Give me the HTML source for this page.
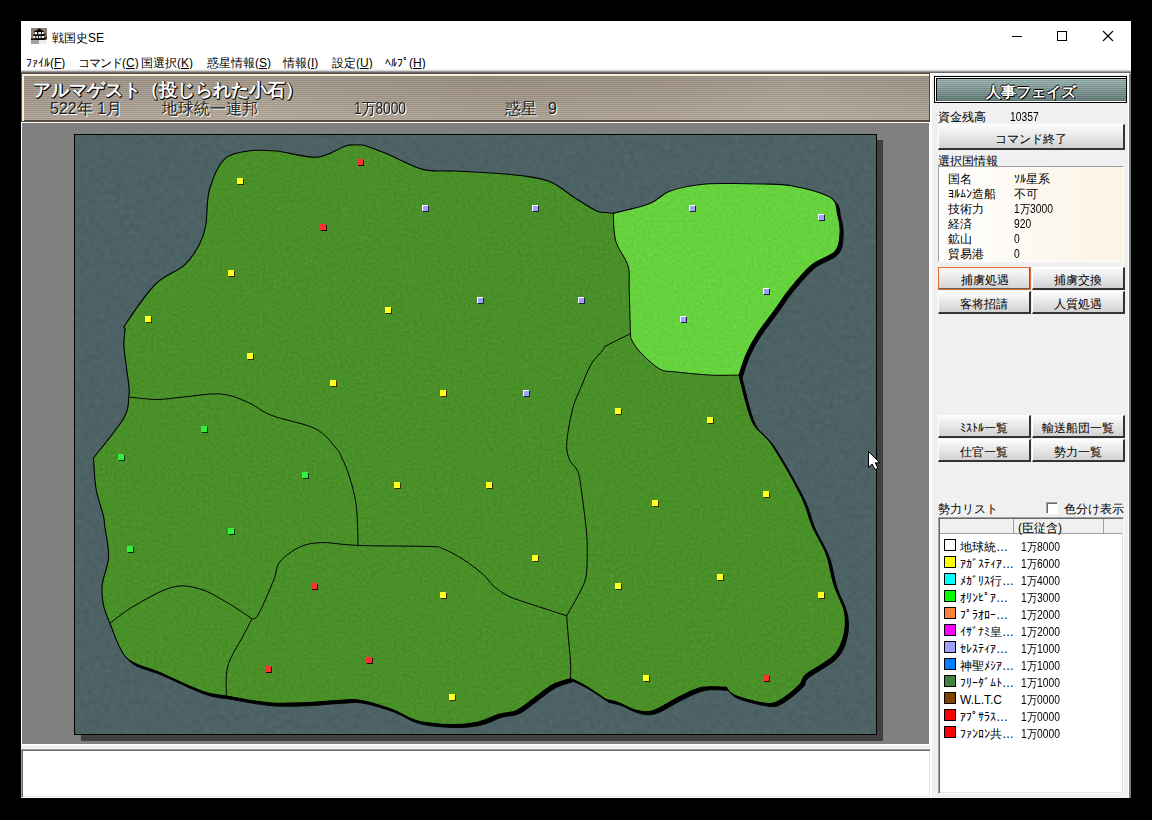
<!DOCTYPE html>
<html><head><meta charset="utf-8">
<style>
@font-face{font-family:"JF";src:local("Liberation Sans");size-adjust:133.3%;unicode-range:U+3000-9FFF,U+FF01-FF5E}
@font-face{font-family:"JF";src:local("Liberation Sans");size-adjust:66.7%;unicode-range:U+FF61-FF9F}
@font-face{font-family:"JP";src:local("Liberation Sans");size-adjust:133.3%;unicode-range:U+3000-309F,U+4E00-9FFF,U+FF01-FF5E}
@font-face{font-family:"JP";src:local("Liberation Sans");size-adjust:93%;unicode-range:U+30A0-30FF}
@font-face{font-family:"JP";src:local("Liberation Sans");size-adjust:66.7%;unicode-range:U+FF61-FF9F}
*{margin:0;padding:0;box-sizing:border-box}
html,body{width:1152px;height:820px;overflow:hidden;background:#000}
body{position:relative;font-family:JP,"Liberation Sans",sans-serif;font-size:12px;color:#000}
.a{position:absolute}
.jf{font-family:JF,"Liberation Sans",sans-serif}
.n{transform:scaleX(.86);transform-origin:0 0}
.t{position:absolute;white-space:nowrap;line-height:1;margin-top:2px}
#win{left:21px;top:21px;width:1110px;height:777px;background:#fff}
.btn{position:absolute;height:23px;border-top:1px solid #fff;border-left:1px solid #fff;border-right:2px solid #333;border-bottom:2px solid #333;background:linear-gradient(#fcfcfc,#d2d2d2);text-align:center;font-size:12px;line-height:19px;padding-top:3px;white-space:nowrap}
.sw{position:absolute;left:944px;width:12px;height:12px;border:1px solid #000}
</style></head><body>
<div id="win" class="a"></div>

<!-- title bar -->
<svg class="a" style="left:31px;top:28px" width="16" height="16" viewBox="0 0 16 16"><rect width="16" height="16" fill="#8a7e6c"/><path d="M0 12H16V16H0Z" fill="#a8a49c"/><path d="M8 12H16V16H8Z" fill="#ececec"/><path d="M8.5 0.2C10 1.5 11.5 2.5 12.8 3.3L12.5 4H3.2L3 3.4C5 2.5 7 1.5 8.5 0.2Z" fill="#050505"/><rect x="4" y="4" width="8.5" height="2.3" fill="#f4f4f4"/><rect x="6" y="4" width="1.4" height="2.3" fill="#222"/><rect x="10" y="4" width="1" height="2.3" fill="#222"/><path d="M2 6.6L12 6.3L14.6 5.2L14.2 7.2L12.5 8.1H2.5Z" fill="#050505"/><rect x="2.3" y="8.1" width="10.7" height="2.1" fill="#f0f0f0"/><rect x="4.3" y="8.1" width="1" height="2.1" fill="#222"/><rect x="7" y="8.1" width="1" height="2.1" fill="#222"/><rect x="9.6" y="8.1" width="1" height="2.1" fill="#333"/><path d="M0 10.4L13 10L15.8 8.2L15.6 10.5L13 12H0Z" fill="#050505"/></svg>
<div class="t" style="left:52px;top:30px;font-size:12px">戦国史SE</div>
<div class="a" style="left:1012px;top:36px;width:10px;height:1px;background:#000"></div>
<div class="a" style="left:1057px;top:31px;width:10px;height:10px;border:1px solid #000"></div>
<svg class="a" style="left:1102px;top:30px" width="12" height="12"><path d="M1 1L11 11M11 1L1 11" stroke="#000" stroke-width="1.1"/></svg>

<!-- menu -->
<div class="t" style="left:26px;top:55px;font-size:12px">ﾌｧｲﾙ(<u>F</u>)</div>
<div class="t" style="left:78px;top:55px;font-size:12px"><span style="letter-spacing:-1px">コマンド</span>(<u>C</u>)</div>
<div class="t" style="left:141px;top:55px;font-size:12px">国選択(<u>K</u>)</div>
<div class="t" style="left:207px;top:55px;font-size:12px">惑星情報(<u>S</u>)</div>
<div class="t" style="left:283px;top:55px;font-size:12px">情報(<u>I</u>)</div>
<div class="t" style="left:332px;top:55px;font-size:12px">設定(<u>U</u>)</div>
<div class="t" style="left:385px;top:55px;font-size:12px">ﾍﾙﾌﾟ(<u>H</u>)</div>

<!-- client edge -->
<div class="a" style="left:21px;top:69px;width:1110px;height:1px;background:#f0f0f0"></div>
<div class="a" style="left:21px;top:70px;width:1110px;height:1px;background:#dcdcdc"></div>
<div class="a" style="left:21px;top:71px;width:1110px;height:1px;background:#9a9a9a"></div>
<div class="a" style="left:21px;top:72px;width:1110px;height:1px;background:#6a6a6a"></div>

<!-- header panel -->
<div class="a" style="left:21px;top:73px;width:909px;height:49px;background:#564b40"></div>
<div class="a" style="left:22px;top:74px;width:907px;height:2px;background:#fbeedb"></div>
<div class="a" style="left:22px;top:74px;width:2px;height:47px;background:#fbeedb"></div>
<div class="a" style="left:24px;top:76px;width:905px;height:44px;background:repeating-linear-gradient(rgba(0,0,0,.07) 0,rgba(0,0,0,.07) 1px,rgba(255,255,255,.07) 1px,rgba(255,255,255,.07) 2px),linear-gradient(rgba(0,0,0,.07),rgba(255,255,255,.10)),linear-gradient(90deg,#a69a8a,#aea393 25%,#a49888 50%,#a89c8b 70%,#b0a696 85%,#a89d8e)"></div>
<div class="a" style="left:929px;top:73px;width:1px;height:49px;background:#564b40"></div>

<div class="t jf" style="left:33px;top:79px;font-size:18px;font-weight:bold;color:#fff;text-shadow:1px 1px 0 #000,1px 0 0 #000,0 1px 0 #000">アルマゲスト（投じられた小石）</div>
<div class="t jf" style="left:50px;top:99px;font-size:16px;color:#202020;text-shadow:1px 1px 0 #fff">522年 1月</div>
<div class="t jf" style="left:162px;top:99px;font-size:16px;color:#202020;text-shadow:1px 1px 0 #fff">地球統一連邦</div>
<div class="t jf n" style="left:354px;top:99px;font-size:16px;color:#202020;text-shadow:1px 1px 0 #fff">1万8000</div>
<div class="t jf" style="left:505px;top:99px;font-size:16px;color:#202020;text-shadow:1px 1px 0 #fff">惑星</div><div class="t jf" style="left:548px;top:99px;font-size:16px;color:#202020;text-shadow:1px 1px 0 #fff">9</div>

<!-- map area -->
<div class="a" style="left:21px;top:122px;width:909px;height:1px;background:#fff"></div>
<div class="a" style="left:21px;top:122px;width:1px;height:623px;background:#fff"></div>
<div class="a" style="left:22px;top:123px;width:907px;height:621px;background:#808080"></div>
<div class="a" style="left:877px;top:140px;width:6px;height:601px;background:#404040"></div>
<div class="a" style="left:81px;top:735px;width:796px;height:6px;background:#404040"></div>
<svg class="a" style="left:74px;top:134px" width="803" height="601" viewBox="74 134 803 601">
<defs>
<filter color-interpolation-filters="sRGB" id="nsea" x="74" y="134" width="803" height="601" filterUnits="userSpaceOnUse"><feTurbulence type="fractalNoise" baseFrequency="0.2" numOctaves="2" seed="7" result="n"/><feColorMatrix in="n" type="matrix" values="1 0 0 0 0  1 0 0 0 0  1 0 0 0 0  0 0 0 0 1" result="g"/><feComposite in="g" in2="SourceGraphic" operator="arithmetic" k1="0" k2="0.06" k3="1" k4="-0.03" result="c"/><feComposite in="c" in2="SourceGraphic" operator="in"/></filter>
<filter color-interpolation-filters="sRGB" id="nland" x="74" y="134" width="803" height="601" filterUnits="userSpaceOnUse"><feTurbulence type="fractalNoise" baseFrequency="0.35" numOctaves="2" seed="11" result="n"/><feColorMatrix in="n" type="matrix" values="1 0 0 0 0  1 0 0 0 0  1 0 0 0 0  0 0 0 0 1" result="g"/><feComposite in="g" in2="SourceGraphic" operator="arithmetic" k1="0" k2="0.09" k3="1" k4="-0.045" result="c"/><feComposite in="c" in2="SourceGraphic" operator="in"/></filter>
</defs>
<rect x="74" y="134" width="803" height="601" fill="#000"/>
<rect x="75" y="135" width="801" height="599" fill="#4c6265" filter="url(#nsea)"/>
<clipPath id="landclip"><path d="M224.0,159.6 C230.5,153.1 239.7,152.4 248.4,151.0 C257.1,149.6 265.0,150.0 276.4,151.0 C287.8,152.0 305.3,158.0 316.7,157.2 C328.1,156.4 338.4,148.2 344.9,146.2 C351.4,144.2 352.4,145.1 355.9,145.0 C359.3,144.9 360.1,144.1 365.6,145.7 C371.1,147.3 379.2,150.8 388.8,154.7 C398.4,158.6 411.9,166.7 422.9,169.4 C433.9,172.1 443.2,170.4 454.6,171.0 C466.0,171.6 480.2,172.2 491.2,173.0 C502.2,173.8 510.7,174.1 520.5,175.5 C530.3,176.9 540.9,177.9 549.8,181.6 C558.7,185.2 566.4,192.5 574.1,197.4 C581.8,202.3 590.8,208.3 596.1,210.8 C601.4,213.3 603.1,212.1 606.0,212.5 C608.9,212.9 612.1,213.2 613.3,213.3 C619.4,211.7 640.5,207.2 649.9,203.5 C659.2,199.8 661.3,194.4 669.4,191.3 C677.5,188.2 688.9,186.0 698.7,184.7 C708.5,183.4 717.4,183.6 728.0,183.5 C738.6,183.4 751.5,183.6 762.1,184.0 C772.7,184.4 780.0,183.5 791.4,185.7 C802.8,187.9 822.7,192.6 830.4,197.4 C838.1,202.2 836.1,208.8 837.7,214.5 C839.3,220.2 840.5,225.5 840.1,231.6 C839.7,237.7 840.2,245.3 835.3,251.0 C830.4,256.7 818.6,259.2 810.9,265.7 C803.2,272.2 794.6,283.1 788.9,290.0 C783.2,296.9 782.0,299.9 776.7,307.2 C771.4,314.5 762.3,326.1 757.2,334.0 C752.1,341.9 749.2,347.5 746.2,354.4 C743.2,361.2 740.2,371.7 739.0,375.1 C741.2,382.8 746.8,409.9 752.3,421.5 C757.8,433.1 763.8,432.2 771.9,444.6 C780.0,457.0 794.4,482.3 801.1,495.9 C807.8,509.5 808.0,516.3 812.2,526.0 C816.4,535.7 822.7,544.4 826.3,554.2 C829.9,564.0 831.0,575.5 834.0,584.9 C837.0,594.3 842.5,602.4 844.2,610.5 C845.9,618.6 845.9,626.1 844.2,633.6 C842.5,641.1 840.4,648.6 834.0,655.4 C827.6,662.2 811.6,669.7 805.8,674.6 C800.0,679.5 804.1,680.3 799.4,684.8 C794.7,689.3 783.8,698.5 777.6,701.5 C771.4,704.5 769.5,703.8 762.2,702.7 C755.0,701.6 740.1,697.7 734.1,695.1 C728.1,692.5 727.7,688.7 726.4,687.4 C722.4,687.4 709.8,685.9 702.1,687.4 C694.4,688.9 688.4,692.5 680.3,696.3 C672.2,700.1 660.7,708.0 653.4,710.4 C646.1,712.8 642.5,711.7 636.7,710.4 C630.9,709.1 623.9,704.5 618.8,702.7 C613.7,700.9 608.1,700.0 606.0,699.4 C602.6,697.2 591.8,689.6 585.9,686.1 C580.0,682.6 573.1,679.7 570.5,678.4 C567.5,679.5 558.6,681.6 552.6,684.8 C546.6,688.0 540.7,693.3 534.7,697.6 C528.7,701.9 522.7,707.6 516.7,710.4 C510.7,713.2 505.2,712.4 498.8,714.3 C492.4,716.2 486.0,720.3 478.3,722.0 C470.6,723.7 462.9,724.7 452.7,724.5 C442.4,724.3 427.1,723.3 416.8,720.7 C406.6,718.1 400.6,712.5 391.2,709.1 C381.8,705.7 369.0,701.7 360.5,700.2 C352.0,698.7 349.3,699.8 340.0,700.2 C330.7,700.6 316.4,702.3 304.5,702.7 C292.6,703.1 281.5,703.8 268.7,702.7 C255.9,701.6 238.8,698.2 227.7,696.3 C216.6,694.4 213.6,695.2 202.1,691.2 C190.6,687.2 171.1,677.5 158.5,672.0 C145.9,666.5 134.6,666.0 126.5,657.9 C118.4,649.8 112.7,629.1 109.9,623.3 C108.8,620.3 104.8,611.8 103.5,605.4 C102.2,599.0 101.4,593.0 102.2,584.9 C103.0,576.8 108.2,566.5 108.6,556.7 C109.0,546.9 105.6,532.9 104.7,526.0 C103.8,519.1 104.8,521.6 103.3,515.4 C101.8,509.1 97.6,498.1 96.0,488.5 C94.4,478.9 93.9,463.1 93.5,458.0 C98.6,451.3 118.1,428.2 124.0,417.8 C129.9,407.4 128.1,399.5 128.9,395.9 C128.9,394.3 129.7,394.2 128.9,386.1 C128.1,378.0 124.6,356.5 124.0,347.1 C123.4,337.8 124.8,334.0 125.2,330.0 C125.6,326.0 121.3,330.7 126.4,323.0 C131.5,315.3 146.1,293.6 155.7,284.0 C165.3,274.4 176.7,272.0 183.8,265.7 C190.9,259.4 194.8,252.9 198.4,246.2 C202.1,239.5 203.9,234.9 205.7,225.5 C207.5,216.1 206.3,201.0 209.4,190.0 C212.5,179.0 217.5,166.1 224.0,159.6Z"/></clipPath>
<path d="M224.0,159.6 C230.5,153.1 239.7,152.4 248.4,151.0 C257.1,149.6 265.0,150.0 276.4,151.0 C287.8,152.0 305.3,158.0 316.7,157.2 C328.1,156.4 338.4,148.2 344.9,146.2 C351.4,144.2 352.4,145.1 355.9,145.0 C359.3,144.9 360.1,144.1 365.6,145.7 C371.1,147.3 379.2,150.8 388.8,154.7 C398.4,158.6 411.9,166.7 422.9,169.4 C433.9,172.1 443.2,170.4 454.6,171.0 C466.0,171.6 480.2,172.2 491.2,173.0 C502.2,173.8 510.7,174.1 520.5,175.5 C530.3,176.9 540.9,177.9 549.8,181.6 C558.7,185.2 566.4,192.5 574.1,197.4 C581.8,202.3 590.8,208.3 596.1,210.8 C601.4,213.3 603.1,212.1 606.0,212.5 C608.9,212.9 612.1,213.2 613.3,213.3 C619.4,211.7 640.5,207.2 649.9,203.5 C659.2,199.8 661.3,194.4 669.4,191.3 C677.5,188.2 688.9,186.0 698.7,184.7 C708.5,183.4 717.4,183.6 728.0,183.5 C738.6,183.4 751.5,183.6 762.1,184.0 C772.7,184.4 780.0,183.5 791.4,185.7 C802.8,187.9 822.7,192.6 830.4,197.4 C838.1,202.2 836.1,208.8 837.7,214.5 C839.3,220.2 840.5,225.5 840.1,231.6 C839.7,237.7 840.2,245.3 835.3,251.0 C830.4,256.7 818.6,259.2 810.9,265.7 C803.2,272.2 794.6,283.1 788.9,290.0 C783.2,296.9 782.0,299.9 776.7,307.2 C771.4,314.5 762.3,326.1 757.2,334.0 C752.1,341.9 749.2,347.5 746.2,354.4 C743.2,361.2 740.2,371.7 739.0,375.1 C741.2,382.8 746.8,409.9 752.3,421.5 C757.8,433.1 763.8,432.2 771.9,444.6 C780.0,457.0 794.4,482.3 801.1,495.9 C807.8,509.5 808.0,516.3 812.2,526.0 C816.4,535.7 822.7,544.4 826.3,554.2 C829.9,564.0 831.0,575.5 834.0,584.9 C837.0,594.3 842.5,602.4 844.2,610.5 C845.9,618.6 845.9,626.1 844.2,633.6 C842.5,641.1 840.4,648.6 834.0,655.4 C827.6,662.2 811.6,669.7 805.8,674.6 C800.0,679.5 804.1,680.3 799.4,684.8 C794.7,689.3 783.8,698.5 777.6,701.5 C771.4,704.5 769.5,703.8 762.2,702.7 C755.0,701.6 740.1,697.7 734.1,695.1 C728.1,692.5 727.7,688.7 726.4,687.4 C722.4,687.4 709.8,685.9 702.1,687.4 C694.4,688.9 688.4,692.5 680.3,696.3 C672.2,700.1 660.7,708.0 653.4,710.4 C646.1,712.8 642.5,711.7 636.7,710.4 C630.9,709.1 623.9,704.5 618.8,702.7 C613.7,700.9 608.1,700.0 606.0,699.4 C602.6,697.2 591.8,689.6 585.9,686.1 C580.0,682.6 573.1,679.7 570.5,678.4 C567.5,679.5 558.6,681.6 552.6,684.8 C546.6,688.0 540.7,693.3 534.7,697.6 C528.7,701.9 522.7,707.6 516.7,710.4 C510.7,713.2 505.2,712.4 498.8,714.3 C492.4,716.2 486.0,720.3 478.3,722.0 C470.6,723.7 462.9,724.7 452.7,724.5 C442.4,724.3 427.1,723.3 416.8,720.7 C406.6,718.1 400.6,712.5 391.2,709.1 C381.8,705.7 369.0,701.7 360.5,700.2 C352.0,698.7 349.3,699.8 340.0,700.2 C330.7,700.6 316.4,702.3 304.5,702.7 C292.6,703.1 281.5,703.8 268.7,702.7 C255.9,701.6 238.8,698.2 227.7,696.3 C216.6,694.4 213.6,695.2 202.1,691.2 C190.6,687.2 171.1,677.5 158.5,672.0 C145.9,666.5 134.6,666.0 126.5,657.9 C118.4,649.8 112.7,629.1 109.9,623.3 C108.8,620.3 104.8,611.8 103.5,605.4 C102.2,599.0 101.4,593.0 102.2,584.9 C103.0,576.8 108.2,566.5 108.6,556.7 C109.0,546.9 105.6,532.9 104.7,526.0 C103.8,519.1 104.8,521.6 103.3,515.4 C101.8,509.1 97.6,498.1 96.0,488.5 C94.4,478.9 93.9,463.1 93.5,458.0 C98.6,451.3 118.1,428.2 124.0,417.8 C129.9,407.4 128.1,399.5 128.9,395.9 C128.9,394.3 129.7,394.2 128.9,386.1 C128.1,378.0 124.6,356.5 124.0,347.1 C123.4,337.8 124.8,334.0 125.2,330.0 C125.6,326.0 121.3,330.7 126.4,323.0 C131.5,315.3 146.1,293.6 155.7,284.0 C165.3,274.4 176.7,272.0 183.8,265.7 C190.9,259.4 194.8,252.9 198.4,246.2 C202.1,239.5 203.9,234.9 205.7,225.5 C207.5,216.1 206.3,201.0 209.4,190.0 C212.5,179.0 217.5,166.1 224.0,159.6Z" transform="translate(3,3)" fill="#000" stroke="#000" stroke-width="1"/>
<path d="M224.0,159.6 C230.5,153.1 239.7,152.4 248.4,151.0 C257.1,149.6 265.0,150.0 276.4,151.0 C287.8,152.0 305.3,158.0 316.7,157.2 C328.1,156.4 338.4,148.2 344.9,146.2 C351.4,144.2 352.4,145.1 355.9,145.0 C359.3,144.9 360.1,144.1 365.6,145.7 C371.1,147.3 379.2,150.8 388.8,154.7 C398.4,158.6 411.9,166.7 422.9,169.4 C433.9,172.1 443.2,170.4 454.6,171.0 C466.0,171.6 480.2,172.2 491.2,173.0 C502.2,173.8 510.7,174.1 520.5,175.5 C530.3,176.9 540.9,177.9 549.8,181.6 C558.7,185.2 566.4,192.5 574.1,197.4 C581.8,202.3 590.8,208.3 596.1,210.8 C601.4,213.3 603.1,212.1 606.0,212.5 C608.9,212.9 612.1,213.2 613.3,213.3 C619.4,211.7 640.5,207.2 649.9,203.5 C659.2,199.8 661.3,194.4 669.4,191.3 C677.5,188.2 688.9,186.0 698.7,184.7 C708.5,183.4 717.4,183.6 728.0,183.5 C738.6,183.4 751.5,183.6 762.1,184.0 C772.7,184.4 780.0,183.5 791.4,185.7 C802.8,187.9 822.7,192.6 830.4,197.4 C838.1,202.2 836.1,208.8 837.7,214.5 C839.3,220.2 840.5,225.5 840.1,231.6 C839.7,237.7 840.2,245.3 835.3,251.0 C830.4,256.7 818.6,259.2 810.9,265.7 C803.2,272.2 794.6,283.1 788.9,290.0 C783.2,296.9 782.0,299.9 776.7,307.2 C771.4,314.5 762.3,326.1 757.2,334.0 C752.1,341.9 749.2,347.5 746.2,354.4 C743.2,361.2 740.2,371.7 739.0,375.1 C741.2,382.8 746.8,409.9 752.3,421.5 C757.8,433.1 763.8,432.2 771.9,444.6 C780.0,457.0 794.4,482.3 801.1,495.9 C807.8,509.5 808.0,516.3 812.2,526.0 C816.4,535.7 822.7,544.4 826.3,554.2 C829.9,564.0 831.0,575.5 834.0,584.9 C837.0,594.3 842.5,602.4 844.2,610.5 C845.9,618.6 845.9,626.1 844.2,633.6 C842.5,641.1 840.4,648.6 834.0,655.4 C827.6,662.2 811.6,669.7 805.8,674.6 C800.0,679.5 804.1,680.3 799.4,684.8 C794.7,689.3 783.8,698.5 777.6,701.5 C771.4,704.5 769.5,703.8 762.2,702.7 C755.0,701.6 740.1,697.7 734.1,695.1 C728.1,692.5 727.7,688.7 726.4,687.4 C722.4,687.4 709.8,685.9 702.1,687.4 C694.4,688.9 688.4,692.5 680.3,696.3 C672.2,700.1 660.7,708.0 653.4,710.4 C646.1,712.8 642.5,711.7 636.7,710.4 C630.9,709.1 623.9,704.5 618.8,702.7 C613.7,700.9 608.1,700.0 606.0,699.4 C602.6,697.2 591.8,689.6 585.9,686.1 C580.0,682.6 573.1,679.7 570.5,678.4 C567.5,679.5 558.6,681.6 552.6,684.8 C546.6,688.0 540.7,693.3 534.7,697.6 C528.7,701.9 522.7,707.6 516.7,710.4 C510.7,713.2 505.2,712.4 498.8,714.3 C492.4,716.2 486.0,720.3 478.3,722.0 C470.6,723.7 462.9,724.7 452.7,724.5 C442.4,724.3 427.1,723.3 416.8,720.7 C406.6,718.1 400.6,712.5 391.2,709.1 C381.8,705.7 369.0,701.7 360.5,700.2 C352.0,698.7 349.3,699.8 340.0,700.2 C330.7,700.6 316.4,702.3 304.5,702.7 C292.6,703.1 281.5,703.8 268.7,702.7 C255.9,701.6 238.8,698.2 227.7,696.3 C216.6,694.4 213.6,695.2 202.1,691.2 C190.6,687.2 171.1,677.5 158.5,672.0 C145.9,666.5 134.6,666.0 126.5,657.9 C118.4,649.8 112.7,629.1 109.9,623.3 C108.8,620.3 104.8,611.8 103.5,605.4 C102.2,599.0 101.4,593.0 102.2,584.9 C103.0,576.8 108.2,566.5 108.6,556.7 C109.0,546.9 105.6,532.9 104.7,526.0 C103.8,519.1 104.8,521.6 103.3,515.4 C101.8,509.1 97.6,498.1 96.0,488.5 C94.4,478.9 93.9,463.1 93.5,458.0 C98.6,451.3 118.1,428.2 124.0,417.8 C129.9,407.4 128.1,399.5 128.9,395.9 C128.9,394.3 129.7,394.2 128.9,386.1 C128.1,378.0 124.6,356.5 124.0,347.1 C123.4,337.8 124.8,334.0 125.2,330.0 C125.6,326.0 121.3,330.7 126.4,323.0 C131.5,315.3 146.1,293.6 155.7,284.0 C165.3,274.4 176.7,272.0 183.8,265.7 C190.9,259.4 194.8,252.9 198.4,246.2 C202.1,239.5 203.9,234.9 205.7,225.5 C207.5,216.1 206.3,201.0 209.4,190.0 C212.5,179.0 217.5,166.1 224.0,159.6Z" fill="#4a9029" filter="url(#nland)"/>
<g clip-path="url(#landclip)"><path d="M613.3,213.3 C613.7,218.0 613.3,232.6 615.8,241.3 C618.2,250.0 625.8,257.6 628.0,265.7 C630.2,273.8 628.8,278.6 629.2,290.0 C629.6,301.4 630.2,326.7 630.4,334.0 C630.6,335.0 630.0,336.8 631.6,339.8 C633.2,342.8 635.4,347.1 640.1,352.0 C644.8,356.9 653.6,365.7 659.7,369.0 C665.8,372.3 668.2,371.0 676.7,372.0 C685.2,373.0 700.5,374.6 710.9,375.1 C721.3,375.6 734.3,375.1 739.0,375.1 L900,375.1 L900,120 L613.3,120 Z" fill="#66d23e" filter="url(#nland)"/></g>
<path d="M224.0,159.6 C230.5,153.1 239.7,152.4 248.4,151.0 C257.1,149.6 265.0,150.0 276.4,151.0 C287.8,152.0 305.3,158.0 316.7,157.2 C328.1,156.4 338.4,148.2 344.9,146.2 C351.4,144.2 352.4,145.1 355.9,145.0 C359.3,144.9 360.1,144.1 365.6,145.7 C371.1,147.3 379.2,150.8 388.8,154.7 C398.4,158.6 411.9,166.7 422.9,169.4 C433.9,172.1 443.2,170.4 454.6,171.0 C466.0,171.6 480.2,172.2 491.2,173.0 C502.2,173.8 510.7,174.1 520.5,175.5 C530.3,176.9 540.9,177.9 549.8,181.6 C558.7,185.2 566.4,192.5 574.1,197.4 C581.8,202.3 590.8,208.3 596.1,210.8 C601.4,213.3 603.1,212.1 606.0,212.5 C608.9,212.9 612.1,213.2 613.3,213.3 C619.4,211.7 640.5,207.2 649.9,203.5 C659.2,199.8 661.3,194.4 669.4,191.3 C677.5,188.2 688.9,186.0 698.7,184.7 C708.5,183.4 717.4,183.6 728.0,183.5 C738.6,183.4 751.5,183.6 762.1,184.0 C772.7,184.4 780.0,183.5 791.4,185.7 C802.8,187.9 822.7,192.6 830.4,197.4 C838.1,202.2 836.1,208.8 837.7,214.5 C839.3,220.2 840.5,225.5 840.1,231.6 C839.7,237.7 840.2,245.3 835.3,251.0 C830.4,256.7 818.6,259.2 810.9,265.7 C803.2,272.2 794.6,283.1 788.9,290.0 C783.2,296.9 782.0,299.9 776.7,307.2 C771.4,314.5 762.3,326.1 757.2,334.0 C752.1,341.9 749.2,347.5 746.2,354.4 C743.2,361.2 740.2,371.7 739.0,375.1 C741.2,382.8 746.8,409.9 752.3,421.5 C757.8,433.1 763.8,432.2 771.9,444.6 C780.0,457.0 794.4,482.3 801.1,495.9 C807.8,509.5 808.0,516.3 812.2,526.0 C816.4,535.7 822.7,544.4 826.3,554.2 C829.9,564.0 831.0,575.5 834.0,584.9 C837.0,594.3 842.5,602.4 844.2,610.5 C845.9,618.6 845.9,626.1 844.2,633.6 C842.5,641.1 840.4,648.6 834.0,655.4 C827.6,662.2 811.6,669.7 805.8,674.6 C800.0,679.5 804.1,680.3 799.4,684.8 C794.7,689.3 783.8,698.5 777.6,701.5 C771.4,704.5 769.5,703.8 762.2,702.7 C755.0,701.6 740.1,697.7 734.1,695.1 C728.1,692.5 727.7,688.7 726.4,687.4 C722.4,687.4 709.8,685.9 702.1,687.4 C694.4,688.9 688.4,692.5 680.3,696.3 C672.2,700.1 660.7,708.0 653.4,710.4 C646.1,712.8 642.5,711.7 636.7,710.4 C630.9,709.1 623.9,704.5 618.8,702.7 C613.7,700.9 608.1,700.0 606.0,699.4 C602.6,697.2 591.8,689.6 585.9,686.1 C580.0,682.6 573.1,679.7 570.5,678.4 C567.5,679.5 558.6,681.6 552.6,684.8 C546.6,688.0 540.7,693.3 534.7,697.6 C528.7,701.9 522.7,707.6 516.7,710.4 C510.7,713.2 505.2,712.4 498.8,714.3 C492.4,716.2 486.0,720.3 478.3,722.0 C470.6,723.7 462.9,724.7 452.7,724.5 C442.4,724.3 427.1,723.3 416.8,720.7 C406.6,718.1 400.6,712.5 391.2,709.1 C381.8,705.7 369.0,701.7 360.5,700.2 C352.0,698.7 349.3,699.8 340.0,700.2 C330.7,700.6 316.4,702.3 304.5,702.7 C292.6,703.1 281.5,703.8 268.7,702.7 C255.9,701.6 238.8,698.2 227.7,696.3 C216.6,694.4 213.6,695.2 202.1,691.2 C190.6,687.2 171.1,677.5 158.5,672.0 C145.9,666.5 134.6,666.0 126.5,657.9 C118.4,649.8 112.7,629.1 109.9,623.3 C108.8,620.3 104.8,611.8 103.5,605.4 C102.2,599.0 101.4,593.0 102.2,584.9 C103.0,576.8 108.2,566.5 108.6,556.7 C109.0,546.9 105.6,532.9 104.7,526.0 C103.8,519.1 104.8,521.6 103.3,515.4 C101.8,509.1 97.6,498.1 96.0,488.5 C94.4,478.9 93.9,463.1 93.5,458.0 C98.6,451.3 118.1,428.2 124.0,417.8 C129.9,407.4 128.1,399.5 128.9,395.9 C128.9,394.3 129.7,394.2 128.9,386.1 C128.1,378.0 124.6,356.5 124.0,347.1 C123.4,337.8 124.8,334.0 125.2,330.0 C125.6,326.0 121.3,330.7 126.4,323.0 C131.5,315.3 146.1,293.6 155.7,284.0 C165.3,274.4 176.7,272.0 183.8,265.7 C190.9,259.4 194.8,252.9 198.4,246.2 C202.1,239.5 203.9,234.9 205.7,225.5 C207.5,216.1 206.3,201.0 209.4,190.0 C212.5,179.0 217.5,166.1 224.0,159.6Z" fill="none" stroke="#000" stroke-width="1.1"/>
<path d="M613.3,213.3 C613.7,218.0 613.3,232.6 615.8,241.3 C618.2,250.0 625.8,257.6 628.0,265.7 C630.2,273.8 628.8,278.6 629.2,290.0 C629.6,301.4 630.2,326.7 630.4,334.0 C630.6,335.0 630.0,336.8 631.6,339.8 C633.2,342.8 635.4,347.1 640.1,352.0 C644.8,356.9 653.6,365.7 659.7,369.0 C665.8,372.3 668.2,371.0 676.7,372.0 C685.2,373.0 700.5,374.6 710.9,375.1 C721.3,375.6 734.3,375.1 739.0,375.1" fill="none" stroke="#000" stroke-width="1"/>
<path d="M128.9,397.0 C133.6,397.4 147.8,399.5 156.9,399.5 C166.1,399.5 173.2,397.9 183.8,397.0 C194.4,396.1 209.7,393.1 220.3,393.9 C230.9,394.7 238.6,398.4 247.2,402.0 C255.8,405.6 260.2,410.9 271.6,415.4 C283.0,419.9 304.7,423.3 315.5,428.8 C326.3,434.3 331.8,443.4 336.2,448.3 C340.6,453.2 339.9,453.7 342.0,458.0 C344.1,462.3 346.4,467.6 348.5,473.9 C350.6,480.2 353.2,489.0 354.6,495.9 C356.0,502.8 356.5,507.1 357.1,515.4 C357.7,523.7 357.9,540.5 358.0,545.5" fill="none" stroke="#000" stroke-width="1"/><path d="M109.9,623.3 C113.7,620.5 122.7,612.7 132.9,606.7 C143.1,600.7 160.2,590.5 171.3,587.5 C182.4,584.5 190.1,586.2 199.5,588.8 C208.9,591.3 218.9,597.8 227.7,602.8 C236.4,607.8 247.9,616.1 252.0,618.7" fill="none" stroke="#000" stroke-width="1"/><path d="M252.0,618.7 C250.5,621.6 246.6,629.4 243.0,636.1 C239.4,642.9 233.1,652.8 230.3,659.2 C227.5,665.6 227.1,668.4 226.4,674.6 C225.8,680.8 226.4,692.7 226.4,696.3" fill="none" stroke="#000" stroke-width="1"/><path d="M252.0,618.7 C253.1,618.0 254.8,620.9 258.4,614.4 C262.0,607.9 270.4,588.3 273.8,579.8 C277.2,571.2 275.9,567.8 278.9,563.1 C281.9,558.4 287.0,554.7 291.7,551.6 C296.4,548.5 301.6,545.9 307.1,544.4 C312.7,542.9 318.9,542.6 325.0,542.6 C331.1,542.6 336.8,543.9 344.0,544.4 C351.2,544.9 353.9,545.4 368.2,545.7 C382.5,546.1 417.3,546.0 429.7,546.5 C442.1,547.0 436.9,546.4 442.5,548.5 C448.1,550.6 456.2,554.9 463.0,559.3 C469.8,563.7 478.3,570.2 483.4,574.7 C488.5,579.2 489.4,582.6 493.7,586.2 C498.0,589.8 502.3,593.2 509.1,596.4 C515.9,599.6 525.1,602.2 534.7,605.4 C544.3,608.6 561.4,614.0 566.7,615.7" fill="none" stroke="#000" stroke-width="1"/><path d="M566.7,615.7 C566.9,618.7 567.4,625.9 568.0,633.6 C568.6,641.3 570.1,654.3 570.5,661.8 C570.9,669.3 570.5,675.6 570.5,678.4" fill="none" stroke="#000" stroke-width="1"/><path d="M630.4,333.7 C626.3,335.7 610.5,343.3 606.0,345.9 C601.5,348.5 605.9,346.5 603.4,349.5 C600.9,352.5 594.9,358.0 591.2,364.1 C587.6,370.2 584.5,378.8 581.5,386.1 C578.5,393.4 575.4,398.6 572.9,408.0 C570.4,417.4 567.4,433.6 566.8,442.2 C566.2,450.8 567.5,454.4 569.3,459.3 C571.1,464.2 575.8,466.2 577.8,471.5 C579.8,476.8 580.1,481.2 581.5,491.0 C582.9,500.8 585.3,519.9 586.3,530.0 C587.2,540.1 587.3,543.7 587.2,551.6 C587.1,559.5 587.4,569.9 585.9,577.2 C584.4,584.5 581.4,588.8 578.2,595.2 C575.0,601.6 568.6,612.3 566.7,615.7" fill="none" stroke="#000" stroke-width="1"/><rect x="238" y="179" width="6" height="6" fill="#3a2a00"/><rect x="237" y="178" width="6" height="6" fill="#ffff20"/><rect x="238" y="179" width="5" height="5" fill="#ffff20"/><rect x="229" y="271" width="6" height="6" fill="#3a2a00"/><rect x="228" y="270" width="6" height="6" fill="#ffff20"/><rect x="229" y="271" width="5" height="5" fill="#ffff20"/><rect x="146" y="317" width="6" height="6" fill="#3a2a00"/><rect x="145" y="316" width="6" height="6" fill="#ffff20"/><rect x="146" y="317" width="5" height="5" fill="#ffff20"/><rect x="386" y="308" width="6" height="6" fill="#3a2a00"/><rect x="385" y="307" width="6" height="6" fill="#ffff20"/><rect x="386" y="308" width="5" height="5" fill="#ffff20"/><rect x="248" y="354" width="6" height="6" fill="#3a2a00"/><rect x="247" y="353" width="6" height="6" fill="#ffff20"/><rect x="248" y="354" width="5" height="5" fill="#ffff20"/><rect x="331" y="381" width="6" height="6" fill="#3a2a00"/><rect x="330" y="380" width="6" height="6" fill="#ffff20"/><rect x="331" y="381" width="5" height="5" fill="#ffff20"/><rect x="441" y="391" width="6" height="6" fill="#3a2a00"/><rect x="440" y="390" width="6" height="6" fill="#ffff20"/><rect x="441" y="391" width="5" height="5" fill="#ffff20"/><rect x="395" y="483" width="6" height="6" fill="#3a2a00"/><rect x="394" y="482" width="6" height="6" fill="#ffff20"/><rect x="395" y="483" width="5" height="5" fill="#ffff20"/><rect x="487" y="483" width="6" height="6" fill="#3a2a00"/><rect x="486" y="482" width="6" height="6" fill="#ffff20"/><rect x="487" y="483" width="5" height="5" fill="#ffff20"/><rect x="616" y="409" width="6" height="6" fill="#3a2a00"/><rect x="615" y="408" width="6" height="6" fill="#ffff20"/><rect x="616" y="409" width="5" height="5" fill="#ffff20"/><rect x="708" y="418" width="6" height="6" fill="#3a2a00"/><rect x="707" y="417" width="6" height="6" fill="#ffff20"/><rect x="708" y="418" width="5" height="5" fill="#ffff20"/><rect x="653" y="501" width="6" height="6" fill="#3a2a00"/><rect x="652" y="500" width="6" height="6" fill="#ffff20"/><rect x="653" y="501" width="5" height="5" fill="#ffff20"/><rect x="764" y="492" width="6" height="6" fill="#3a2a00"/><rect x="763" y="491" width="6" height="6" fill="#ffff20"/><rect x="764" y="492" width="5" height="5" fill="#ffff20"/><rect x="533" y="556" width="6" height="6" fill="#3a2a00"/><rect x="532" y="555" width="6" height="6" fill="#ffff20"/><rect x="533" y="556" width="5" height="5" fill="#ffff20"/><rect x="441" y="593" width="6" height="6" fill="#3a2a00"/><rect x="440" y="592" width="6" height="6" fill="#ffff20"/><rect x="441" y="593" width="5" height="5" fill="#ffff20"/><rect x="450" y="695" width="6" height="6" fill="#3a2a00"/><rect x="449" y="694" width="6" height="6" fill="#ffff20"/><rect x="450" y="695" width="5" height="5" fill="#ffff20"/><rect x="616" y="584" width="6" height="6" fill="#3a2a00"/><rect x="615" y="583" width="6" height="6" fill="#ffff20"/><rect x="616" y="584" width="5" height="5" fill="#ffff20"/><rect x="718" y="575" width="6" height="6" fill="#3a2a00"/><rect x="717" y="574" width="6" height="6" fill="#ffff20"/><rect x="718" y="575" width="5" height="5" fill="#ffff20"/><rect x="819" y="593" width="6" height="6" fill="#3a2a00"/><rect x="818" y="592" width="6" height="6" fill="#ffff20"/><rect x="819" y="593" width="5" height="5" fill="#ffff20"/><rect x="644" y="676" width="6" height="6" fill="#3a2a00"/><rect x="643" y="675" width="6" height="6" fill="#ffff20"/><rect x="644" y="676" width="5" height="5" fill="#ffff20"/><rect x="321" y="225" width="6" height="6" fill="#300000"/><rect x="320" y="224" width="6" height="6" fill="#ff3030"/><rect x="321" y="225" width="5" height="5" fill="#ff3030"/><rect x="358" y="160" width="6" height="6" fill="#300000"/><rect x="357" y="159" width="6" height="6" fill="#ff3030"/><rect x="358" y="160" width="5" height="5" fill="#ff3030"/><rect x="312" y="584" width="6" height="6" fill="#300000"/><rect x="311" y="583" width="6" height="6" fill="#ff3030"/><rect x="312" y="584" width="5" height="5" fill="#ff3030"/><rect x="266" y="667" width="6" height="6" fill="#300000"/><rect x="265" y="666" width="6" height="6" fill="#ff3030"/><rect x="266" y="667" width="5" height="5" fill="#ff3030"/><rect x="367" y="658" width="6" height="6" fill="#300000"/><rect x="366" y="657" width="6" height="6" fill="#ff3030"/><rect x="367" y="658" width="5" height="5" fill="#ff3030"/><rect x="764" y="676" width="6" height="6" fill="#300000"/><rect x="763" y="675" width="6" height="6" fill="#ff3030"/><rect x="764" y="676" width="5" height="5" fill="#ff3030"/><rect x="423" y="206" width="6" height="6" fill="#202040"/><rect x="422" y="205" width="6" height="6" fill="#ffffff"/><rect x="423" y="206" width="5" height="5" fill="#a0a0ff"/><rect x="533" y="206" width="6" height="6" fill="#202040"/><rect x="532" y="205" width="6" height="6" fill="#ffffff"/><rect x="533" y="206" width="5" height="5" fill="#a0a0ff"/><rect x="478" y="298" width="6" height="6" fill="#202040"/><rect x="477" y="297" width="6" height="6" fill="#ffffff"/><rect x="478" y="298" width="5" height="5" fill="#a0a0ff"/><rect x="579" y="298" width="6" height="6" fill="#202040"/><rect x="578" y="297" width="6" height="6" fill="#ffffff"/><rect x="579" y="298" width="5" height="5" fill="#a0a0ff"/><rect x="524" y="391" width="6" height="6" fill="#202040"/><rect x="523" y="390" width="6" height="6" fill="#ffffff"/><rect x="524" y="391" width="5" height="5" fill="#a0a0ff"/><rect x="690" y="206" width="6" height="6" fill="#202040"/><rect x="689" y="205" width="6" height="6" fill="#ffffff"/><rect x="690" y="206" width="5" height="5" fill="#a0a0ff"/><rect x="819" y="215" width="6" height="6" fill="#202040"/><rect x="818" y="214" width="6" height="6" fill="#ffffff"/><rect x="819" y="215" width="5" height="5" fill="#a0a0ff"/><rect x="764" y="289" width="6" height="6" fill="#202040"/><rect x="763" y="288" width="6" height="6" fill="#ffffff"/><rect x="764" y="289" width="5" height="5" fill="#a0a0ff"/><rect x="681" y="317" width="6" height="6" fill="#202040"/><rect x="680" y="316" width="6" height="6" fill="#ffffff"/><rect x="681" y="317" width="5" height="5" fill="#a0a0ff"/><rect x="202" y="427" width="6" height="6" fill="#003000"/><rect x="201" y="426" width="6" height="6" fill="#30f040"/><rect x="202" y="427" width="5" height="5" fill="#30f040"/><rect x="119" y="455" width="6" height="6" fill="#003000"/><rect x="118" y="454" width="6" height="6" fill="#30f040"/><rect x="119" y="455" width="5" height="5" fill="#30f040"/><rect x="303" y="473" width="6" height="6" fill="#003000"/><rect x="302" y="472" width="6" height="6" fill="#30f040"/><rect x="303" y="473" width="5" height="5" fill="#30f040"/><rect x="229" y="529" width="6" height="6" fill="#003000"/><rect x="228" y="528" width="6" height="6" fill="#30f040"/><rect x="229" y="529" width="5" height="5" fill="#30f040"/><rect x="128" y="547" width="6" height="6" fill="#003000"/><rect x="127" y="546" width="6" height="6" fill="#30f040"/><rect x="128" y="547" width="5" height="5" fill="#30f040"/></svg>

<!-- message box -->
<div class="a" style="left:21px;top:744px;width:909px;height:1px;background:#fff"></div>
<div class="a" style="left:21px;top:745px;width:909px;height:5px;background:#f0f0f0"></div>
<div class="a" style="left:21px;top:749px;width:910px;height:49px;background:#fff;border-top:1px solid #a0a0a0;border-left:1px solid #a0a0a0;border-bottom:1px solid #fff;border-right:1px solid #fff;box-shadow:inset 1px 1px 0 #696969,inset -1px -1px 0 #e3e3e3"></div>

<!-- right panel -->
<div class="a" style="left:930px;top:73px;width:201px;height:725px;background:#f0f0f0;border-left:2px solid #fff;border-top:1px solid #fff;border-right:2px solid #7a7a7a;box-shadow:inset -1px 0 0 #fff"></div>
<div class="a" style="left:934px;top:76px;width:193px;height:27px;border:1px solid #000;background:#fff"></div>
<div class="a" style="left:936px;top:78px;width:190px;height:23px;border-top:1px solid #000;border-left:1px solid #000;background:repeating-linear-gradient(rgba(255,255,255,.12) 0,rgba(255,255,255,.12) 1px,rgba(0,0,0,.08) 1px,rgba(0,0,0,.08) 2px),linear-gradient(#98b2ae,#5e7672)"></div>
<div class="t jf" style="left:936px;top:82px;width:190px;text-align:center;font-size:15px;font-weight:bold;color:#fff;text-shadow:1px 1px 0 #000,-1px 0 0 #000,0 -1px 0 #000">人事フェイズ</div>

<div class="t" style="left:938px;top:109px">資金残高</div>
<div class="t n" style="left:1010px;top:109px">10357</div>
<div class="btn" style="left:938px;top:124px;width:187px;height:26px;line-height:22px">コマンド終了</div>
<div class="t" style="left:938px;top:153px">選択国情報</div>

<div class="a" style="left:938px;top:166px;width:186px;height:96px;border-top:1px solid #a0a0a0;border-left:1px solid #a0a0a0;border-bottom:1px solid #fff;border-right:1px solid #fff;background:linear-gradient(90deg,#fff,#fbf3e4)"></div>
<div class="t" style="left:948px;top:171px">国名</div><div class="t" style="left:1014px;top:171px">ｿﾙ星系</div>
<div class="t" style="left:948px;top:186px">ﾖﾙﾑﾝ造船</div><div class="t" style="left:1014px;top:186px">不可</div>
<div class="t" style="left:948px;top:201px">技術力</div><div class="t n" style="left:1014px;top:201px">1万3000</div>
<div class="t" style="left:948px;top:216px">経済</div><div class="t n" style="left:1014px;top:216px">920</div>
<div class="t" style="left:948px;top:231px">鉱山</div><div class="t n" style="left:1014px;top:231px">0</div>
<div class="t" style="left:948px;top:246px">貿易港</div><div class="t n" style="left:1014px;top:246px">0</div>

<div class="btn" style="left:938px;top:267px;width:93px;border:1px solid #e07030;box-shadow:inset -1px -1px 0 #606060">捕虜処遇</div>
<div class="btn" style="left:1032px;top:267px;width:93px">捕虜交換</div>
<div class="btn" style="left:938px;top:291px;width:93px">客将招請</div>
<div class="btn" style="left:1032px;top:291px;width:93px">人質処遇</div>

<div class="btn" style="left:938px;top:415px;width:93px">ﾐｽﾄﾙ一覧</div>
<div class="btn" style="left:1032px;top:415px;width:93px">輸送船団一覧</div>
<div class="btn" style="left:938px;top:439px;width:93px">仕官一覧</div>
<div class="btn" style="left:1032px;top:439px;width:93px">勢力一覧</div>

<div class="t" style="left:938px;top:501px">勢力リスト</div>
<div class="a" style="left:1046px;top:502px;width:12px;height:12px;border-top:1px solid #a0a0a0;border-left:1px solid #a0a0a0;border-right:1px solid #fff;border-bottom:1px solid #fff;box-shadow:inset 1px 1px 0 #696969;background:#fff"></div>
<div class="t" style="left:1064px;top:501px">色分け表示</div>

<div class="a" style="left:938px;top:517px;width:186px;height:277px;border-top:1px solid #a0a0a0;border-left:1px solid #a0a0a0;border-right:1px solid #fff;border-bottom:1px solid #fff;box-shadow:inset 1px 1px 0 #696969,inset -1px -1px 0 #e3e3e3;background:#fff"></div>
<div class="a" style="left:940px;top:519px;width:182px;height:15px;background:#f0f0f0;border-bottom:1px solid #a0a0a0"></div>
<div class="a" style="left:1013px;top:519px;width:1px;height:15px;background:#a0a0a0"></div>
<div class="a" style="left:1103px;top:519px;width:1px;height:15px;background:#a0a0a0"></div>
<div class="t" style="left:1018px;top:520px">(臣従含)</div>
<div class="sw" style="top:539px;background:#ffffff"></div><div class="t" style="left:960px;top:539px">地球統…</div><div class="t n" style="left:1021px;top:539px">1万8000</div>
<div class="sw" style="top:556px;background:#ffff00"></div><div class="t" style="left:960px;top:556px">ｱｶﾞｽﾃｨｱ…</div><div class="t n" style="left:1021px;top:556px">1万6000</div>
<div class="sw" style="top:573px;background:#00ffff"></div><div class="t" style="left:960px;top:573px">ﾒｶﾞﾘｽ行…</div><div class="t n" style="left:1021px;top:573px">1万4000</div>
<div class="sw" style="top:590px;background:#00ff00"></div><div class="t" style="left:960px;top:590px">ｵﾘﾝﾋﾟｱ…</div><div class="t n" style="left:1021px;top:590px">1万3000</div>
<div class="sw" style="top:607px;background:#ff8040"></div><div class="t" style="left:960px;top:607px">ﾌﾟﾗｵﾛｰ…</div><div class="t n" style="left:1021px;top:607px">1万2000</div>
<div class="sw" style="top:624px;background:#ff00ff"></div><div class="t" style="left:960px;top:624px">ｲｻﾞﾅﾐ皇…</div><div class="t n" style="left:1021px;top:624px">1万2000</div>
<div class="sw" style="top:641px;background:#a0a0ff"></div><div class="t" style="left:960px;top:641px">ｾﾚｽﾃｨｱ…</div><div class="t n" style="left:1021px;top:641px">1万1000</div>
<div class="sw" style="top:658px;background:#0080ff"></div><div class="t" style="left:960px;top:658px">神聖ﾒｼｱ…</div><div class="t n" style="left:1021px;top:658px">1万1000</div>
<div class="sw" style="top:675px;background:#408040"></div><div class="t" style="left:960px;top:675px">ﾌﾘｰﾀﾞﾑﾄ…</div><div class="t n" style="left:1021px;top:675px">1万1000</div>
<div class="sw" style="top:692px;background:#804000"></div><div class="t" style="left:960px;top:692px">W.L.T.C</div><div class="t n" style="left:1021px;top:692px">1万0000</div>
<div class="sw" style="top:709px;background:#ff0000"></div><div class="t" style="left:960px;top:709px">ｱﾌﾟｻﾗｽ…</div><div class="t n" style="left:1021px;top:709px">1万0000</div>
<div class="sw" style="top:726px;background:#ff0000"></div><div class="t" style="left:960px;top:726px">ﾌｧﾝﾛﾝ共…</div><div class="t n" style="left:1021px;top:726px">1万0000</div>
<svg class="a" style="left:867px;top:450px" width="14" height="21" viewBox="0 0 14 21"><path d="M1.5,1.5 L1.5,17.5 L5.2,14 L8,19.5 L10.8,18.3 L8.3,12.8 L12.8,12.8 Z" fill="#fff" stroke="#000" stroke-width="1"/></svg>
</body></html>
